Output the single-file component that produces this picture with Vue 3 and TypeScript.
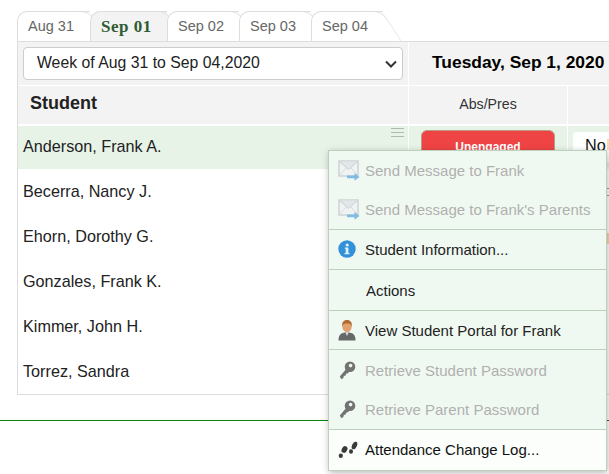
<script setup lang="ts">
const tabs = ['Aug 31', 'Sep 01', 'Sep 02', 'Sep 03', 'Sep 04']
const students = ['Anderson, Frank A.', 'Becerra, Nancy J.', 'Ehorn, Dorothy G.', 'Gonzales, Frank K.', 'Kimmer, John H.', 'Torrez, Sandra']

type Item = { label: string; icon?: string; off?: boolean; sep?: boolean; plain?: boolean }
const menu: Item[] = [
  { label: 'Send Message to Frank', icon: 'mail', off: true },
  { label: "Send Message to Frank's Parents", icon: 'mail', off: true, sep: true },
  { label: 'Student Information...', icon: 'info', sep: true },
  { label: 'Actions', sep: true, plain: true },
  { label: 'View Student Portal for Frank', icon: 'user', sep: true },
  { label: 'Retrieve Student Password', icon: 'key', off: true },
  { label: 'Retrieve Parent Password', icon: 'key', off: true, sep: true },
  { label: 'Attendance Change Log...', icon: 'steps' },
]
</script>

<template>
  <div class="page">
    <div class="tabs">
      <div v-for="(t, i) in tabs" :key="t" class="tab" :class="{ active: i === 1 }"><span>{{ t }}</span></div>
    </div>

    <div class="panel">
      <div class="toolbar">
        <div class="week-cell">
          <select class="week">
            <option>Week of Aug 31 to Sep 04,2020</option>
          </select>
          <svg class="chevron" width="12" height="8" viewBox="0 0 12 8">
            <path d="M1 1.500l5 5 5-5" fill="none" stroke="#333" stroke-width="2" />
          </svg>
        </div>
        <div class="day">Tuesday, Sep 1, 2020</div>
      </div>

      <div class="head">
        <div class="head-student">Student</div>
        <div class="head-abs">Abs/Pres</div>
        <div class="head-rest"></div>
      </div>

      <div class="row selected">
        <div class="name">
          Anderson, Frank A.
          <span class="burger"><i></i><i></i><i></i></span>
        </div>
        <div class="abs"><button class="unengaged">Unengaged</button></div>
        <div class="note"><span class="note-box">No<i class="note-more"></i></span></div>
      </div>
      <div v-for="(s, i) in students.slice(1)" :key="s" class="row">
        <div class="name">{{ s }}</div>
        <div class="abs blank"></div>
        <div class="note">
          <i v-if="i === 0" class="mark-box"></i>
          <i v-if="i === 1" class="mark-orange"></i>
        </div>
      </div>
    </div>

    <div class="rule"></div>

    <div class="menu">
      <div
        v-for="m in menu"
        :key="m.label"
        class="item"
        :class="{ off: m.off, sep: m.sep, plain: m.plain }"
      >
        <span class="ico">
          <svg v-if="m.icon === 'mail'" class="faded" width="22" height="21" viewBox="0 0 22 21">
            <rect x="1" y="1" width="19" height="15" fill="#f0f3f4" stroke="#c6ccd0" stroke-width="1.500" />
            <path d="M1.500 1.500l9 8 9-8" fill="#dfe4e7" stroke="#c2c8cc" />
            <path d="M1.500 15.500l6.500-7.500M19.500 15.500l-6.500-7.500" fill="none" stroke="#d2d7da" />
            <path d="M9 15.500h7.500V13l5 4-5 3.700v-2.500H9z" fill="#6fb2e2" />
          </svg>
          <svg v-else-if="m.icon === 'info'" width="18" height="18" viewBox="0 0 18 18">
            <circle cx="9" cy="9" r="8.700" fill="#3291d8" />
            <circle cx="9.200" cy="5" r="1.600" fill="#dff0fb" />
            <path d="M6.800 7.500h3.600V13h1.100v1.300h-5V13h1.200V8.800H6.800z" fill="#dff0fb" />
          </svg>
          <svg v-else-if="m.icon === 'user'" width="18" height="22" viewBox="0 0 18 22">
            <path d="M0.500 21.500c0-5.500 2-8 8.500-8s8.500 2.500 8.500 8z" fill="#66696a" />
            <path d="M7.500 13.500l1.500 3.500 1.500-3.500z" fill="#e6e6e2" />
            <ellipse cx="9" cy="7.500" rx="4.700" ry="5.700" fill="#e0a070" />
            <path d="M4.200 8C3.500 2.500 6.500 1 9 1s5.500 1.500 4.800 7c-.5-2.500-1.500-3.500-4.800-3.500S4.700 5.500 4.200 8z" fill="#b06a30" />
          </svg>
          <svg v-else-if="m.icon === 'key'" width="18" height="19" viewBox="0 0 18 19">
            <path d="M9 7L1.800 15.500l1.600 2.700 2-1.300.4-1.900 1.900-.4.400-1.800 1.800-.5 3-3.300z" fill="#737373" />
            <path fill-rule="evenodd" d="M12 .5a5.300 5.300 0 1 1 0 10.600 5.300 5.300 0 0 1 0-10.600zm.6 2.300a1.800 1.800 0 1 0 0 3.600 1.800 1.800 0 0 0 0-3.600z" fill="#737373" />
          </svg>
          <svg v-else-if="m.icon === 'steps'" width="21" height="18" viewBox="0 0 21 18">
            <ellipse cx="6.500" cy="8.500" rx="2.700" ry="3.600" fill="#3a3a3a" transform="rotate(30 6.500 8.500)" />
            <ellipse cx="2.800" cy="14.800" rx="2.100" ry="2.200" fill="#3a3a3a" />
            <ellipse cx="16.500" cy="4.500" rx="2.400" ry="4" fill="#3a3a3a" transform="rotate(25 16.500 4.500)" />
            <ellipse cx="13" cy="10.500" rx="2" ry="2.300" fill="#3a3a3a" />
          </svg>
        </span>
        <span class="label">{{ m.label }}</span>
      </div>
    </div>
  </div>
</template>

<style scoped>
.page {
  position: relative;
  width: 609px;
  height: 474px;
  overflow: hidden;
  background: #fff;
  font-family: "Liberation Sans", Arial, sans-serif;
  color: #222;
}
.tabs {
  display: flex;
  height: 30px;
  padding: 11px 0 0 17px;
}
.tab {
  position: relative;
  width: 72px;
  height: 30px;
  box-sizing: border-box;
  padding: 6px 0 0 10px;
  font-size: 14.5px;
  color: #666;
  background: #fff;
  border-left: 1px solid #ddd;
  border-top: 1px solid #ddd;
  border-top-left-radius: 10px;
}
.tab:first-child {
  width: 73px;
}
.tab span {
  position: relative;
  z-index: 1;
}
.tab::after {
  content: "";
  position: absolute;
  top: -1px;
  bottom: 0;
  right: -9px;
  width: 24px;
  box-sizing: border-box;
  background: inherit;
  border-top: 1px solid #ddd;
  border-right: 1px solid #ddd;
  border-top-right-radius: 8px;
  transform: skewX(33deg);
  z-index: 0;
}
.tab.active {
  width: 77px;
  background: #f3f3f3;
  font-family: "Liberation Serif", "Times New Roman", serif;
  font-weight: bold;
  font-size: 17px;
  letter-spacing: 0.5px;
  color: #2f5c33;
  padding-top: 5px;
}
.panel {
  margin-left: 17px;
  width: 620px;
  border-top: 1px solid #ddd;
  border-left: 1px solid #ddd;
  border-bottom: 1px solid #ddd;
  box-sizing: border-box;
  height: 354px;
}
.toolbar {
  display: flex;
  height: 43px;
  background: #f3f3f3;
}
.week-cell {
  position: relative;
  width: 391px;
  padding: 5px 5px 0;
  box-sizing: border-box;
  border-right: 1px solid #fff;
}
.week {
  width: 380px;
  height: 33px;
  padding: 0 0 2px 13px;
  font: 15.8px "Liberation Sans", Arial, sans-serif;
  color: #222;
  background: #fff;
  border: 1px solid #ccc;
  border-radius: 4px;
  appearance: none;
}
.chevron {
  position: absolute;
  left: 367px;
  top: 18px;
  pointer-events: none;
}
.day {
  padding: 10px 0 0 23px;
  font-size: 17.4px;
  font-weight: bold;
  color: #000;
}
.head {
  display: flex;
  height: 38px;
  margin-top: 1px;
  background: #f3f3f3;
  align-items: center;
  border-bottom: 2px solid #fff;
}
.head-student {
  width: 391px;
  height: 100%;
  padding: 7px 0 0 12px;
  box-sizing: border-box;
  font-size: 18px;
  font-weight: bold;
  border-right: 1px solid #fff;
}
.head-abs {
  width: 159px;
  height: 100%;
  padding-top: 10px;
  box-sizing: border-box;
  font-size: 14.2px;
  text-align: center;
  color: #333;
  border-right: 1px solid #fff;
}
.row {
  height: 45px;
  display: flex;
  align-items: center;
}
.row.selected {
  height: 43px;
  background: #e8f3e8;
}
.name {
  position: relative;
  width: 391px;
  height: 100%;
  display: flex;
  align-items: center;
  box-sizing: border-box;
  padding-left: 5px;
  font-size: 16.2px;
  color: #222;
  border-right: 1px solid transparent;
}
.selected .name {
  padding-bottom: 2px;
  border-right-color: #fff;
}
.burger {
  position: absolute;
  top: 2px;
  right: 4px;
  width: 13px;
  display: flex;
  flex-direction: column;
  gap: 3px;
}
.burger i {
  height: 1px;
  background: #a9bda9;
}
.abs {
  display: flex;
  align-items: flex-start;
  width: 159px;
  height: 100%;
  box-sizing: border-box;
  padding: 4px 0 0 12px;
  border-right: 1px solid #fff;
}
.abs.blank {
  border-right-color: transparent;
}
.unengaged {
  width: 134px;
  height: 34px;
  padding: 0;
  background: #ef4444;
  border: 1px solid #bd9a86;
  border-radius: 6px;
  color: #fff;
  font: bold 12px "Liberation Sans", Arial, sans-serif;
}
.note {
  position: relative;
  flex: 1;
  height: 100%;
  padding: 6px 0 0 5px;
  box-sizing: border-box;
}
.note-box {
  display: flex;
  width: 60px;
  height: 30px;
  padding: 4px 0 0 12px;
  box-sizing: border-box;
  background: #fff;
  border-radius: 4px;
  font-size: 16.2px;
  color: #111;
}
.note-more {
  width: 6px;
  height: 11px;
  margin: 3px 0 0 1px;
  background: #f6d9ae;
}
.mark-box {
  position: absolute;
  left: 39px;
  top: 19px;
  width: 3px;
  height: 8px;
  box-sizing: border-box;
  border-top: 1px solid #999;
  border-bottom: 1px solid #999;
}
.mark-orange {
  position: absolute;
  left: 39px;
  top: 19px;
  width: 3px;
  height: 11px;
  background: #f6d9ae;
}
.rule {
  margin-top: 25px;
  height: 1px;
  background: #0a800a;
}
.menu {
  position: absolute;
  left: 328px;
  top: 150px;
  width: 279px;
  box-sizing: border-box;
  background: #f0f9f1;
  border: 1px solid #bcd0bc;
  box-shadow: 1px 2px 7px rgba(0, 0, 0, 0.28);
}
.item {
  display: flex;
  align-items: center;
  height: 39.6px;
  box-sizing: border-box;
  padding-left: 9px;
  font-size: 15px;
  color: #222;
}
.item:last-child {
  height: 40px;
  background: #fbfefb;
  color: #111;
}
.item.plain {
  height: 41px;
  padding-top: 2px;
}
.item.sep {
  border-bottom: 1px solid #bcd0bc;
}
.item.off {
  color: #b0b0b0;
}
.faded {
  opacity: 0.85;
}
.ico {
  width: 27px;
  flex: none;
  display: flex;
  align-items: center;
  justify-content: flex-start;
}
.plain .label {
  margin-left: 1px;
}
</style>
